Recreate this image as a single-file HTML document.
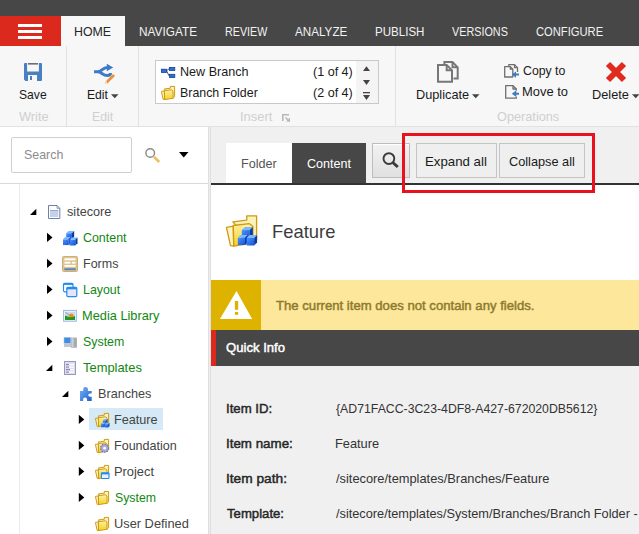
<!DOCTYPE html>
<html><head><meta charset="utf-8">
<style>
*{margin:0;padding:0;box-sizing:border-box}
html,body{width:639px;height:534px;overflow:hidden;background:#fff;font-family:"Liberation Sans",sans-serif;color:#333}
.a{position:absolute}
.t{position:absolute;white-space:nowrap;transform-origin:0 0}
svg{position:absolute;left:0;top:0}
</style></head><body>
<!-- top bars -->
<div class="a" style="left:0;top:0;width:639px;height:46px;background:#474747"></div>
<div class="a" style="left:0;top:16px;width:61px;height:30px;background:#dc291e"></div>
<div class="a" style="left:18px;top:24px;width:24px;height:3px;background:#fff"></div>
<div class="a" style="left:18px;top:30px;width:24px;height:3px;background:#fff"></div>
<div class="a" style="left:18px;top:36px;width:24px;height:3px;background:#fff"></div>
<div class="a" style="left:61px;top:16px;width:64px;height:30px;background:#f7f7f7"></div>
<!-- ribbon -->
<div class="a" style="left:0;top:46px;width:639px;height:80px;background:#f7f7f7"></div>
<div class="a" style="left:0;top:126px;width:639px;height:1px;background:#e2e2e2"></div>
<div class="a" style="left:66px;top:46px;width:1px;height:80px;background:#e2e2e2"></div>
<div class="a" style="left:138px;top:46px;width:1px;height:80px;background:#e2e2e2"></div>
<div class="a" style="left:395px;top:46px;width:1px;height:80px;background:#e2e2e2"></div>
<div class="a" style="left:155px;top:60px;width:224px;height:44px;background:#fff;border:1px solid #c9c9c9"></div>
<div class="a" style="left:356px;top:61px;width:22px;height:42px;background:#f4f4f4"></div>
<!-- left panel -->
<div class="a" style="left:0;top:127px;width:208px;height:407px;background:#fff"></div>
<div class="a" style="left:11px;top:137px;width:121px;height:36px;border:1px solid #cfcfcf;border-radius:2px;background:#fff"></div>
<div class="a" style="left:0;top:183px;width:208px;height:1px;background:#d9d9d9"></div>
<div class="a" style="left:19px;top:184px;width:1px;height:350px;background:#ebebef"></div>
<div class="a" style="left:89px;top:408px;width:74px;height:22px;background:#d5eaf6"></div>
<!-- splitter -->
<div class="a" style="left:208px;top:127px;width:3px;height:407px;background:#dfdfdf"></div><div class="a" style="left:209px;top:127px;width:1px;height:407px;background:#ededed"></div>
<!-- right panel -->
<div class="a" style="left:211px;top:127px;width:428px;height:56px;background:#f0f0f0"></div>
<div class="a" style="left:226px;top:143px;width:66px;height:40px;background:#fff"></div>
<div class="a" style="left:292px;top:143px;width:74px;height:40px;background:#474747"></div>
<div class="a" style="left:372px;top:143px;width:38px;height:35px;border:1px solid #bdbdbd;background:linear-gradient(#f2f2f2,#e0e0e0);box-shadow:inset 0 1px 0 #fff"></div>
<div class="a" style="left:416px;top:143px;width:81px;height:35px;border:1px solid #c4c4c4;background:#efefef"></div>
<div class="a" style="left:499px;top:143px;width:86px;height:35px;border:1px solid #c4c4c4;background:#efefef"></div>
<div class="a" style="left:211px;top:183px;width:428px;height:2px;background:#333"></div>
<div class="a" style="left:211px;top:185px;width:428px;height:95px;background:#fff"></div>
<div class="a" style="left:211px;top:280px;width:428px;height:50px;background:#fce79b"></div>
<div class="a" style="left:211px;top:280px;width:50px;height:50px;background:#deb300"></div>
<div class="a" style="left:211px;top:330px;width:428px;height:36px;background:#474747"></div>
<div class="a" style="left:211px;top:330px;width:5px;height:36px;background:#dc291e"></div>
<div class="a" style="left:211px;top:366px;width:428px;height:168px;background:#f0f0f0"></div>
<!-- red highlight box -->
<div class="a" style="left:402px;top:133px;width:193px;height:60px;border:3px solid #e8111c"></div>
<div class="t" style="left:74.25px;top:24.00px;font-size:13px;line-height:15px;color:#262626;transform:scaleX(0.9513);">HOME</div>
<div class="t" style="left:138.84px;top:24.00px;font-size:13px;line-height:15px;color:#f2f2f2;transform:scaleX(0.9104);">NAVIGATE</div>
<div class="t" style="left:224.68px;top:24.00px;font-size:13px;line-height:15px;color:#f2f2f2;transform:scaleX(0.8248);">REVIEW</div>
<div class="t" style="left:295.00px;top:24.00px;font-size:13px;line-height:15px;color:#f2f2f2;transform:scaleX(0.8978);">ANALYZE</div>
<div class="t" style="left:374.61px;top:24.00px;font-size:13px;line-height:15px;color:#f2f2f2;transform:scaleX(0.8892);">PUBLISH</div>
<div class="t" style="left:452.20px;top:24.00px;font-size:13px;line-height:15px;color:#f2f2f2;transform:scaleX(0.8317);">VERSIONS</div>
<div class="t" style="left:536.28px;top:24.00px;font-size:13px;line-height:15px;color:#f2f2f2;transform:scaleX(0.8605);">CONFIGURE</div>
<div class="t" style="left:18.53px;top:87.00px;font-size:13px;line-height:15px;color:#1a1a1a;transform:scaleX(0.9335);">Save</div>
<div class="t" style="left:18.50px;top:109.00px;font-size:13px;line-height:15px;color:#cfcfcf;transform:scaleX(0.9843);">Write</div>
<div class="t" style="left:87.06px;top:87.00px;font-size:13px;line-height:15px;color:#1a1a1a;transform:scaleX(0.9351);">Edit</div>
<div class="t" style="left:91.65px;top:109.00px;font-size:13px;line-height:15px;color:#cfcfcf;transform:scaleX(0.9491);">Edit</div>
<div class="t" style="left:179.83px;top:64.00px;font-size:13px;line-height:15px;color:#1a1a1a;transform:scaleX(0.9670);">New Branch</div>
<div class="t" style="left:179.85px;top:85.00px;font-size:13px;line-height:15px;color:#1a1a1a;transform:scaleX(0.9525);">Branch Folder</div>
<div class="t" style="left:312.53px;top:64.00px;font-size:13px;line-height:15px;color:#1a1a1a;transform:scaleX(0.9658);">(1 of 4)</div>
<div class="t" style="left:312.53px;top:85.00px;font-size:13px;line-height:15px;color:#1a1a1a;transform:scaleX(0.9658);">(2 of 4)</div>
<div class="t" style="left:240.30px;top:109.00px;font-size:13px;line-height:15px;color:#cfcfcf;transform:scaleX(0.9968);">Insert</div>
<div class="t" style="left:415.52px;top:87.00px;font-size:13px;line-height:15px;color:#1a1a1a;transform:scaleX(0.9798);">Duplicate</div>
<div class="t" style="left:522.83px;top:63.00px;font-size:13px;line-height:15px;color:#1a1a1a;transform:scaleX(0.9457);">Copy to</div>
<div class="t" style="left:522.40px;top:84.00px;font-size:13px;line-height:15px;color:#1a1a1a;transform:scaleX(0.9952);">Move to</div>
<div class="t" style="left:591.62px;top:87.00px;font-size:13px;line-height:15px;color:#1a1a1a;transform:scaleX(0.9820);">Delete</div>
<div class="t" style="left:496.91px;top:109.00px;font-size:13px;line-height:15px;color:#cfcfcf;transform:scaleX(0.9786);">Operations</div>
<div class="t" style="left:23.72px;top:147.00px;font-size:13px;line-height:15px;color:#8c8c8c;transform:scaleX(0.9558);">Search</div>
<div class="t" style="left:67.21px;top:204.00px;font-size:13px;line-height:15px;color:#444;transform:scaleX(0.9734);">sitecore</div>
<div class="t" style="left:83.03px;top:230.00px;font-size:13px;line-height:15px;color:#118811;transform:scaleX(0.9550);">Content</div>
<div class="t" style="left:82.64px;top:256.00px;font-size:13px;line-height:15px;color:#444;transform:scaleX(0.9625);">Forms</div>
<div class="t" style="left:82.65px;top:282.00px;font-size:13px;line-height:15px;color:#118811;transform:scaleX(0.9521);">Layout</div>
<div class="t" style="left:82.02px;top:308.00px;font-size:13px;line-height:15px;color:#118811;transform:scaleX(0.9839);">Media Library</div>
<div class="t" style="left:82.52px;top:334.00px;font-size:13px;line-height:15px;color:#118811;transform:scaleX(0.9521);">System</div>
<div class="t" style="left:82.80px;top:360.00px;font-size:13px;line-height:15px;color:#118811;transform:scaleX(0.9932);">Templates</div>
<div class="t" style="left:98.28px;top:386.00px;font-size:13px;line-height:15px;color:#444;transform:scaleX(0.9716);">Branches</div>
<div class="t" style="left:114.23px;top:412.00px;font-size:13px;line-height:15px;color:#444;transform:scaleX(0.9729);">Feature</div>
<div class="t" style="left:114.24px;top:438.00px;font-size:13px;line-height:15px;color:#444;transform:scaleX(0.9649);">Foundation</div>
<div class="t" style="left:114.01px;top:464.00px;font-size:13px;line-height:15px;color:#444;transform:scaleX(0.9886);">Project</div>
<div class="t" style="left:114.53px;top:490.00px;font-size:13px;line-height:15px;color:#118811;transform:scaleX(0.9473);">System</div>
<div class="t" style="left:114.01px;top:516.00px;font-size:13px;line-height:15px;color:#444;transform:scaleX(0.9860);">User Defined</div>
<div class="t" style="left:240.53px;top:156.00px;font-size:13px;line-height:15px;color:#555;transform:scaleX(0.9687);">Folder</div>
<div class="t" style="left:306.82px;top:156.00px;font-size:13px;line-height:15px;color:#fff;transform:scaleX(0.9662);">Content</div>
<div class="t" style="left:425.23px;top:154.00px;font-size:13px;line-height:15px;color:#1a1a1a;transform:scaleX(1.0192);">Expand all</div>
<div class="t" style="left:508.66px;top:154.00px;font-size:13px;line-height:15px;color:#1a1a1a;transform:scaleX(0.9800);">Collapse all</div>
<div class="t" style="left:272.35px;top:221.00px;font-size:19px;line-height:21px;color:#3c3c3c;transform:scaleX(0.9682);">Feature</div>
<div class="t" style="left:275.95px;top:298.00px;font-size:13px;line-height:15px;color:#8e7a2e;-webkit-text-stroke:0.45px #8e7a2e;transform:scaleX(1.0104);">The current item does not contain any fields.</div>
<div class="t" style="left:226.10px;top:340.00px;font-size:13px;line-height:15px;color:#ffffff;-webkit-text-stroke:0.45px #ffffff;transform:scaleX(1.0079);">Quick Info</div>
<div class="t" style="left:225.83px;top:401.00px;font-size:13px;line-height:15px;color:#262626;-webkit-text-stroke:0.45px #262626;transform:scaleX(1.0163);">Item ID:</div>
<div class="t" style="left:225.82px;top:436.00px;font-size:13px;line-height:15px;color:#262626;-webkit-text-stroke:0.45px #262626;transform:scaleX(1.0269);">Item name:</div>
<div class="t" style="left:225.79px;top:471.00px;font-size:13px;line-height:15px;color:#262626;-webkit-text-stroke:0.45px #262626;transform:scaleX(1.0541);">Item path:</div>
<div class="t" style="left:226.85px;top:506.00px;font-size:13px;line-height:15px;color:#262626;-webkit-text-stroke:0.45px #262626;transform:scaleX(1.0118);">Template:</div>
<div class="t" style="left:335.61px;top:401.00px;font-size:13px;line-height:15px;color:#333;transform:scaleX(0.9445);">{AD71FACC-3C23-4DF8-A427-672020DB5612}</div>
<div class="t" style="left:334.82px;top:436.00px;font-size:13px;line-height:15px;color:#333;transform:scaleX(0.9845);">Feature</div>
<div class="t" style="left:335.80px;top:471.00px;font-size:13px;line-height:15px;color:#333;transform:scaleX(0.9874);">/sitecore/templates/Branches/Feature</div>
<div class="t" style="left:335.80px;top:506.00px;font-size:13px;line-height:15px;color:#333;transform:scaleX(0.9803);">/sitecore/templates/System/Branches/Branch Folder -</div>
<svg width="639" height="534" viewBox="0 0 639 534"><defs><linearGradient id="fg" x1="0" y1="0" x2="0" y2="1"><stop offset="0" stop-color="#fdf0a8"/><stop offset="1" stop-color="#f3d21c"/></linearGradient><linearGradient id="cf" x1="0" y1="0" x2="1" y2="1"><stop offset="0" stop-color="#4c94ff"/><stop offset="1" stop-color="#1453d8"/></linearGradient><linearGradient id="pz" x1="0" y1="0" x2="1" y2="1"><stop offset="0" stop-color="#78b4f4"/><stop offset="1" stop-color="#1c5ed4"/></linearGradient></defs>
<g fill="#4a80c2"><path d="M24 64 Q24 63 25 63 H27.1 V71.5 H38.9 V63 H41 Q42 63 42 64 V80 Q42 81 41 81 H37 V75 H28 V81 H25.5 L24 79.5 Z"/><rect x="30" y="76" width="2" height="4"/></g>
<rect x="28" y="63" width="10" height="1.6" fill="#6e6e6e"/>
<g fill="none" stroke="#3d7cc4" stroke-width="3"><path d="M94 71.8 H98 C101.5 71.8 102.5 67.5 107.5 67.5"/><path d="M98 71.8 C101.5 71.8 102.5 75.6 107.5 75.6 C109.5 75.6 110.5 74.5 110.5 73"/></g>
<path d="M106.8 63.8 L113.2 67.5 L106.8 71.2 Z" fill="#3d7cc4"/>
<path d="M106.5 82.5 L114 75" stroke="#e8913a" stroke-width="2.6"/>
<path d="M105.2 83.8 L106.8 81.5" stroke="#f7d0a8" stroke-width="1.5"/>
<path d="M111 94.3 L118.5 94.3 L114.75 98.3 Z" fill="#444"/>
<path d="M472 94.3 L479.5 94.3 L475.75 98.3 Z" fill="#444"/>
<path d="M632 94.2 L639.5 94.2 L635.75 98.2 Z" fill="#444"/>
<g stroke="#1c3c8c" stroke-width="0.9"><path d="M166.5 70.7 L169 68.8 M166.5 70.7 L169 75.8" fill="none"/></g>
<g fill="#2c6fd8" stroke="#17408f" stroke-width="0.8"><rect x="161.4" y="69.2" width="5.2" height="3.2"/><rect x="169.4" y="67.4" width="5.4" height="3"/><rect x="169.4" y="74.3" width="5.4" height="3.2"/></g>
<path d="M164.20 89.00 L170.30 88.20 L170.30 86.40 L174.60 86.40 L174.60 96.80 L173.00 98.20 Z" fill="#fdf2b8" stroke="#cf9a12" stroke-width="1.00" stroke-linejoin="round"/><path d="M161.40 91.40 L164.40 90.90 L164.60 99.60 L163.20 99.40 Z" fill="#fdf3c4" stroke="#cf9a12" stroke-width="1.00" stroke-linejoin="round"/><path d="M164.40 90.60 L171.50 89.80 L173.00 91.00 L173.00 98.30 L164.60 99.60 Z" fill="url(#fg)" stroke="#cf9a12" stroke-width="1.00" stroke-linejoin="round"/>
<g fill="#444"><path d="M363 71 L366.5 66.3 L370 71 Z"/><path d="M363 80 L370 80 L366.5 85 Z"/><rect x="363" y="92" width="7" height="1.3"/><path d="M363 95 L370 95 L366.5 100 Z"/></g>
<g fill="none" stroke="#b8b8b8" stroke-width="1.6"><path d="M282.8 121 V114.8 H289"/><path d="M285.5 117.5 L289.5 121.5"/></g><path d="M286 121.6 H290 V117.6 Z" fill="#b8b8b8"/>
<g fill="none" stroke="#777" stroke-width="2" stroke-linejoin="miter"><path d="M444.4 64 V62 H452.5 L457.7 67.3 V78.4 H453.5"/><path d="M452.5 62 V67.3 H457.7"/><path d="M438 65 H446.7 L452 70.3 V81.7 H438 Z"/><path d="M446.7 65 V70.3 H452"/></g>
<g fill="none" stroke="#6f6f6f" stroke-width="1.3" stroke-linejoin="round"><path d="M508.8 66 V64.6 H514.5 L517.5 67.6 V72"/><path d="M514.5 64.6 V67.6 H517.5"/><path d="M504.7 66.7 H510.3 L512.8 69.2 V77 H504.7 Z"/><path d="M510.3 66.7 V69.2 H512.8"/></g>
<path d="M511.8 74.6 L516 71.4 V73.6 H519 V75.6 H516 V77.8 Z" fill="#3d7cc4"/>
<g fill="none" stroke="#6f6f6f" stroke-width="1.3" stroke-linejoin="round"><path d="M516.3 90.5 V89 L513 85.7 H505.7 V98.2 H516.3 V96.8"/><path d="M513 85.7 V89 H516.3"/></g>
<path d="M511.8 93.7 L516.3 90.3 V92.7 H519 V94.8 H516.3 V97.1 Z" fill="#3d7cc4"/>
<path d="M608 64 L624 80 M624 64 L608 80" stroke="#df2a20" stroke-width="6"/>
<circle cx="150.2" cy="153" r="4.3" fill="none" stroke="#8a8a8a" stroke-width="1.4"/><path d="M154 156.8 L159.2 162" stroke="#f0be5a" stroke-width="2.6"/>
<path d="M179 152 L188.5 152 L183.75 157.5 Z" fill="#000"/>
<circle cx="388.9" cy="158.6" r="5.4" fill="none" stroke="#3a3a3a" stroke-width="1.9"/><path d="M392.8 162.5 L397.8 167" stroke="#3a3a3a" stroke-width="3"/>
<path d="M236.5 291 L252.2 319 L219.9 319 Z" fill="#fff"/><rect x="234.9" y="301" width="3.3" height="8.8" fill="#deb300"/><rect x="234.9" y="312" width="3.3" height="2.8" fill="#deb300"/>
<path d="M47 232.8 L52.5 237.4 L47 242 Z" fill="#000"/>
<path d="M47 258.8 L52.5 263.4 L47 268 Z" fill="#000"/>
<path d="M47 284.8 L52.5 289.4 L47 294 Z" fill="#000"/>
<path d="M47 310.8 L52.5 315.4 L47 320 Z" fill="#000"/>
<path d="M47 336.8 L52.5 341.4 L47 346 Z" fill="#000"/>
<path d="M78.8 414.8 L84.3 419.4 L78.8 424 Z" fill="#000"/>
<path d="M78.8 440.8 L84.3 445.4 L78.8 450 Z" fill="#000"/>
<path d="M78.8 466.8 L84.3 471.4 L78.8 476 Z" fill="#000"/>
<path d="M78.8 492.8 L84.3 497.4 L78.8 502 Z" fill="#000"/>
<path d="M30 215 L36.3 215 L36.3 208.7 Z" fill="#000"/>
<path d="M46 371 L52.3 371 L52.3 364.7 Z" fill="#000"/>
<path d="M62 397 L68.3 397 L68.3 390.7 Z" fill="#000"/>
<path d="M48.5 205.5 H57 L59.8 208.3 V218.5 H48.5 Z" fill="#fff" stroke="#6e80a8" stroke-width="1"/><path d="M57 205.5 V208.3 H59.8" fill="none" stroke="#6e80a8" stroke-width="0.8"/><rect x="50" y="210" width="8.3" height="7" fill="#c5d0ea"/><rect x="50" y="210" width="8.3" height="1" fill="#9aa8cc"/>
<rect x="66.19" y="233.23" width="5.74" height="5.74" fill="url(#cf)"/><path d="M66.19 233.23 L68.42 231.00 L74.16 231.00 L71.93 233.23 Z" fill="#7ab8ff"/><path d="M71.93 233.23 L74.16 231.00 L74.16 236.74 L71.93 238.97 Z" fill="#0a3aa8"/><rect x="63.00" y="239.32" width="5.74" height="5.74" fill="url(#cf)"/><path d="M63.00 239.32 L65.23 237.09 L70.97 237.09 L68.74 239.32 Z" fill="#7ab8ff"/><path d="M68.74 239.32 L70.97 237.09 L70.97 242.83 L68.74 245.06 Z" fill="#0a3aa8"/><rect x="69.53" y="239.76" width="5.74" height="5.74" fill="url(#cf)"/><path d="M69.53 239.76 L71.76 237.53 L77.50 237.53 L75.27 239.76 Z" fill="#7ab8ff"/><path d="M75.27 239.76 L77.50 237.53 L77.50 243.27 L75.27 245.50 Z" fill="#0a3aa8"/>
<rect x="62.5" y="256.5" width="15" height="15" rx="1" fill="#dcc590" stroke="#cdb078" stroke-width="1"/><g fill="#fff"><rect x="64.5" y="258.3" width="11" height="2"/><rect x="64.5" y="261.8" width="6" height="1.8"/><rect x="72" y="261.8" width="3.5" height="1.8"/><rect x="64.5" y="265" width="11" height="1.8"/></g><rect x="64.3" y="268.3" width="11.4" height="1.9" fill="#5b82bf"/>
<rect x="63.5" y="283.3" width="9.5" height="8.5" rx="1.2" fill="#fff" stroke="#1e8cf0" stroke-width="1.2"/><rect x="66.8" y="287.3" width="10" height="9.3" rx="1.2" fill="#e6e4f6" stroke="#1e8cf0" stroke-width="1.2"/><rect x="66.8" y="287.3" width="10" height="2" fill="#1e8cf0"/><rect x="63.5" y="283.3" width="9.5" height="1.6" fill="#1e8cf0"/>
<rect x="63.6" y="310.5" width="12.7" height="10.7" fill="#fff" stroke="#9fbde8" stroke-width="1.2"/><rect x="65" y="311.7" width="10" height="8.2" fill="#c8dcf0"/><circle cx="71.3" cy="316" r="2.4" fill="#f58a1c"/><path d="M65 315.6 Q68 316.5 70 317.3 Q73 317.5 75 315.8 V319.9 H65 Z" fill="#1f9a1f"/><path d="M65.3 312.2 L69.5 315.5" stroke="#8a8a9a" stroke-width="0.9"/>
<rect x="63.6" y="337" width="7.4" height="7" fill="#d8d8e4"/><rect x="64.2" y="337.6" width="6.3" height="5.6" fill="#3d8fe6"/><rect x="64" y="344" width="7.5" height="3" fill="#c4c4d4"/><rect x="70.9" y="337.6" width="6" height="10.1" fill="#a8a8b8"/><rect x="71.5" y="338.2" width="2" height="9" fill="#d0d0dc"/><rect x="75" y="341.7" width="1.1" height="1.9" fill="#5fd35f"/>
<rect x="64.5" y="361.5" width="11" height="13" fill="#dedcf2" stroke="#9a98b8" stroke-width="1"/><g fill="#fff"><rect x="66" y="364" width="8" height="1.2"/><rect x="66" y="366.5" width="8" height="1.2"/><rect x="66" y="369" width="8" height="1.2"/><rect x="66" y="371.5" width="8" height="1.2"/></g><g fill="#8a88a8"><rect x="66" y="364" width="3" height="1.2"/><rect x="66" y="366.5" width="3" height="1.2"/><rect x="66" y="369" width="4" height="1.2"/><rect x="66" y="371.5" width="3" height="1.2"/></g>
<path d="M80 391 H83.2 V389 Q83.2 387 85.5 387 Q87.9 387 87.9 389 V391 H91.7 V393.5 H90.2 Q88.2 393.5 88.2 395.1 Q88.2 396.7 90.2 396.7 H91.7 V401 H87 V399.5 Q87 397.6 85 397.6 Q83.1 397.6 83.1 399.5 V401 H80 Z" fill="url(#pz)"/>
<path d="M98.20 416.00 L104.30 415.20 L104.30 413.40 L108.60 413.40 L108.60 423.80 L107.00 425.20 Z" fill="#fdf2b8" stroke="#cf9a12" stroke-width="1.00" stroke-linejoin="round"/><path d="M95.40 418.40 L98.40 417.90 L98.60 426.60 L97.20 426.40 Z" fill="#fdf3c4" stroke="#cf9a12" stroke-width="1.00" stroke-linejoin="round"/><path d="M98.40 417.60 L105.50 416.80 L107.00 418.00 L107.00 425.30 L98.60 426.60 Z" fill="url(#fg)" stroke="#cf9a12" stroke-width="1.00" stroke-linejoin="round"/>
<rect x="102.87" y="420.31" width="3.37" height="3.37" fill="url(#cf)"/><path d="M102.87 420.31 L104.18 419.00 L107.55 419.00 L106.24 420.31 Z" fill="#7ab8ff"/><path d="M106.24 420.31 L107.55 419.00 L107.55 422.37 L106.24 423.68 Z" fill="#0a3aa8"/><rect x="101.00" y="423.88" width="3.37" height="3.37" fill="url(#cf)"/><path d="M101.00 423.88 L102.31 422.57 L105.67 422.57 L104.37 423.88 Z" fill="#7ab8ff"/><path d="M104.37 423.88 L105.67 422.57 L105.67 425.94 L104.37 427.25 Z" fill="#0a3aa8"/><rect x="104.83" y="424.13" width="3.37" height="3.37" fill="url(#cf)"/><path d="M104.83 424.13 L106.13 422.82 L109.50 422.82 L108.19 424.13 Z" fill="#7ab8ff"/><path d="M108.19 424.13 L109.50 422.82 L109.50 426.19 L108.19 427.50 Z" fill="#0a3aa8"/>
<path d="M98.20 442.00 L104.30 441.20 L104.30 439.40 L108.60 439.40 L108.60 449.80 L107.00 451.20 Z" fill="#fdf2b8" stroke="#cf9a12" stroke-width="1.00" stroke-linejoin="round"/><path d="M95.40 444.40 L98.40 443.90 L98.60 452.60 L97.20 452.40 Z" fill="#fdf3c4" stroke="#cf9a12" stroke-width="1.00" stroke-linejoin="round"/><path d="M98.40 443.60 L105.50 442.80 L107.00 444.00 L107.00 451.30 L98.60 452.60 Z" fill="url(#fg)" stroke="#cf9a12" stroke-width="1.00" stroke-linejoin="round"/>
<circle cx="104.6" cy="448.2" r="4" fill="#a8a8d8" stroke="#7878a8" stroke-width="1.2" stroke-dasharray="1.6 1"/><circle cx="104.6" cy="448.2" r="1.4" fill="#fff"/>
<path d="M98.20 468.00 L104.30 467.20 L104.30 465.40 L108.60 465.40 L108.60 475.80 L107.00 477.20 Z" fill="#fdf2b8" stroke="#cf9a12" stroke-width="1.00" stroke-linejoin="round"/><path d="M95.40 470.40 L98.40 469.90 L98.60 478.60 L97.20 478.40 Z" fill="#fdf3c4" stroke="#cf9a12" stroke-width="1.00" stroke-linejoin="round"/><path d="M98.40 469.60 L105.50 468.80 L107.00 470.00 L107.00 477.30 L98.60 478.60 Z" fill="url(#fg)" stroke="#cf9a12" stroke-width="1.00" stroke-linejoin="round"/>
<rect x="101.4" y="472.8" width="7.6" height="5.7" rx="0.8" fill="#eef" stroke="#1e8cf0" stroke-width="1.1"/><rect x="101.4" y="472.8" width="7.6" height="1.6" fill="#1e8cf0"/>
<path d="M98.20 494.00 L104.30 493.20 L104.30 491.40 L108.60 491.40 L108.60 501.80 L107.00 503.20 Z" fill="#fdf2b8" stroke="#cf9a12" stroke-width="1.00" stroke-linejoin="round"/><path d="M95.40 496.40 L98.40 495.90 L98.60 504.60 L97.20 504.40 Z" fill="#fdf3c4" stroke="#cf9a12" stroke-width="1.00" stroke-linejoin="round"/><path d="M98.40 495.60 L105.50 494.80 L107.00 496.00 L107.00 503.30 L98.60 504.60 Z" fill="url(#fg)" stroke="#cf9a12" stroke-width="1.00" stroke-linejoin="round"/>
<path d="M98.20 520.00 L104.30 519.20 L104.30 517.40 L108.60 517.40 L108.60 527.80 L107.00 529.20 Z" fill="#fdf2b8" stroke="#cf9a12" stroke-width="1.00" stroke-linejoin="round"/><path d="M95.40 522.40 L98.40 521.90 L98.60 530.60 L97.20 530.40 Z" fill="#fdf3c4" stroke="#cf9a12" stroke-width="1.00" stroke-linejoin="round"/><path d="M98.40 521.60 L105.50 520.80 L107.00 522.00 L107.00 529.30 L98.60 530.60 Z" fill="url(#fg)" stroke="#cf9a12" stroke-width="1.00" stroke-linejoin="round"/>
<path d="M232.81 221.86 L246.76 220.03 L246.76 215.91 L256.59 215.91 L256.59 239.69 L252.93 242.89 Z" fill="#fdf2b8" stroke="#cf9a12" stroke-width="1.30" stroke-linejoin="round"/><path d="M226.41 227.34 L233.27 226.20 L233.73 246.09 L230.53 245.63 Z" fill="#fdf3c4" stroke="#cf9a12" stroke-width="1.30" stroke-linejoin="round"/><path d="M233.27 225.51 L249.50 223.69 L252.93 226.43 L252.93 243.11 L233.73 246.09 Z" fill="url(#fg)" stroke="#cf9a12" stroke-width="1.30" stroke-linejoin="round"/>
<rect x="241.80" y="230.08" width="7.92" height="7.92" fill="url(#cf)"/><path d="M241.80 230.08 L244.88 227.00 L252.80 227.00 L249.72 230.08 Z" fill="#7ab8ff"/><path d="M249.72 230.08 L252.80 227.00 L252.80 234.92 L249.72 238.00 Z" fill="#0a3aa8"/><rect x="237.80" y="237.80" width="7.20" height="7.20" fill="url(#cf)"/><path d="M237.80 237.80 L240.60 235.00 L247.80 235.00 L245.00 237.80 Z" fill="#7ab8ff"/><path d="M245.00 237.80 L247.80 235.00 L247.80 242.20 L245.00 245.00 Z" fill="#0a3aa8"/><rect x="246.60" y="237.94" width="7.56" height="7.56" fill="url(#cf)"/><path d="M246.60 237.94 L249.54 235.00 L257.10 235.00 L254.16 237.94 Z" fill="#7ab8ff"/><path d="M254.16 237.94 L257.10 235.00 L257.10 242.56 L254.16 245.50 Z" fill="#0a3aa8"/>
</svg>
</body></html>
